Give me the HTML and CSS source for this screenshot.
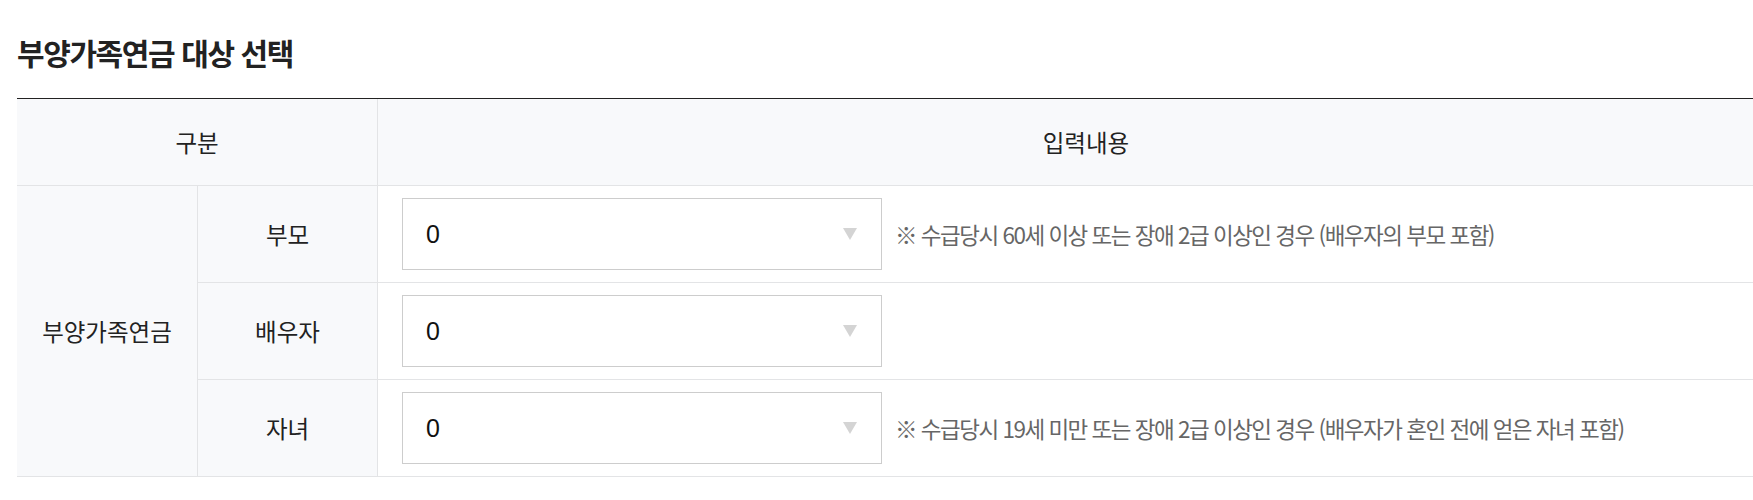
FILE: index.html
```html
<!DOCTYPE html>
<html lang="ko">
<head>
<meta charset="utf-8">
<title>부양가족연금 대상 선택</title>
<link rel="stylesheet" href="styles.css">
</head>
<body>
<div class="page">
  <h2 class="title">부양가족연금 대상 선택</h2>
  <div class="grid">
    <div class="cell head span2">구분</div>
    <div class="cell head">입력내용</div>

    <div class="cell label group">부양가족연금</div>

    <div class="cell label">부모</div>
    <div class="cell input">
      <div class="select"><span class="value">0</span><svg class="caret" width="14" height="12" viewBox="0 0 14 12"><path d="M0 0H14L7 12Z" fill="#d4d4d4"/></svg></div>
      <p class="note">※ 수급당시 60세 이상 또는 장애 2급 이상인 경우 (배우자의 부모 포함)</p>
    </div>

    <div class="cell label">배우자</div>
    <div class="cell input">
      <div class="select"><span class="value">0</span><svg class="caret" width="14" height="12" viewBox="0 0 14 12"><path d="M0 0H14L7 12Z" fill="#d4d4d4"/></svg></div>
    </div>

    <div class="cell label">자녀</div>
    <div class="cell input">
      <div class="select"><span class="value">0</span><svg class="caret" width="14" height="12" viewBox="0 0 14 12"><path d="M0 0H14L7 12Z" fill="#d4d4d4"/></svg></div>
      <p class="note">※ 수급당시 19세 미만 또는 장애 2급 이상인 경우 (배우자가 혼인 전에 얻은 자녀 포함)</p>
    </div>
  </div>
</div>
</body>
</html>
```
FILE: styles.css
```css
html, body {
  margin: 0;
  padding: 0;
  background: #fff;
  overflow: hidden;
}
body {
  font-family: "Noto Sans CJK KR", "Noto Sans", sans-serif;
  color: #222;
}
.page {
  padding: 34px 0 0 17px;
  width: 1777px;
}
.title {
  margin: 0 0 28px 0;
  font-size: 30px;
  line-height: 36px;
  font-weight: 700;
  color: #222;
  letter-spacing: -1.4px;
}
.grid {
  display: grid;
  grid-template-columns: 181px 180px 1fr;
  grid-template-rows: 87px 97px 97px 97px;
  border-top: 1px solid #222;
}
.cell {
  border-bottom: 1px solid #e3e4e6;
  border-right: 1px solid #e3e4e6;
  display: flex;
  align-items: center;
  justify-content: center;
  font-size: 23.5px;
  color: #222;
}
.cell:nth-child(2),
.cell.input {
  border-right: none;
}
.head {
  background: #f8f9fb;
}
.span2 {
  grid-column: span 2;
}
.label {
  background: #f8f9fb;
}
.group {
  grid-row: span 3;
}
.input {
  justify-content: flex-start;
  padding-left: 24px;
}
.select {
  box-sizing: border-box;
  width: 480px;
  height: 72px;
  border: 1px solid #cdcdcd;
  background: #fff;
  display: flex;
  align-items: center;
  justify-content: space-between;
  padding: 0 24px 0 23px;
}
.value {
  font-family: "Liberation Sans", Arial, sans-serif;
  font-size: 25px;
  color: #111;
}
.caret {
  display: block;
}
.note {
  margin: 0 0 0 13px;
  font-size: 22.5px;
  color: #666;
  line-height: 1.2;
  letter-spacing: -1.5px;
}
```
